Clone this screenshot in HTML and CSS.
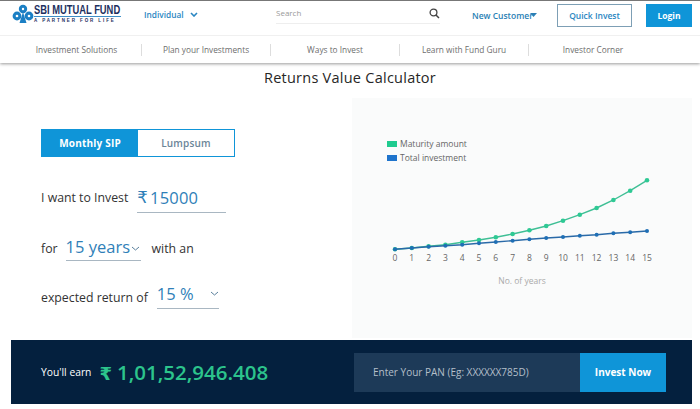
FILE: index.html
```html
<!DOCTYPE html>
<html lang="en">
<head>
    <meta charset="UTF-8">
    <title>Returns Value Calculator</title>
    <link rel="stylesheet" href="styles.css">
</head>
<body>
    <header class="site-header">
        <div class="top-row">
            <a class="logo">
                <svg class="logo-mark" viewBox="0 0 22 20" width="22" height="20">
                    <circle cx="11" cy="5" r="4.2" fill="#1b7fc4"/>
                    <circle cx="5" cy="12" r="4.4" fill="#1b7fc4"/>
                    <circle cx="17" cy="12" r="4.4" fill="#1b7fc4"/>
                    <circle cx="11" cy="5" r="1.2" fill="#fff"/>
                    <circle cx="5" cy="12" r="1.3" fill="#fff"/>
                    <circle cx="17" cy="12" r="1.3" fill="#fff"/>
                    <path d="M11 8 L14.5 19 H7.5 Z" fill="#1b7fc4"/>
                </svg>
                <span class="logo-text">
                    <span class="logo-name">SBI MUTUAL FUND</span>
                    <span class="logo-tag">A PARTNER FOR LIFE</span>
                </span>
            </a>
            <a class="user-type">Individual
                <svg width="8" height="5" viewBox="0 0 8 5"><path d="M1 1 L4 4 L7 1" fill="none" stroke="#2a86c2" stroke-width="1.6"/></svg>
            </a>
            <div class="search">
                <span>Search</span>
                <svg width="11" height="11" viewBox="0 0 11 11"><circle cx="4.5" cy="4.5" r="3.4" fill="none" stroke="#444" stroke-width="1.3"/><path d="M7 7 L10 10" stroke="#444" stroke-width="1.5"/></svg>
            </div>
            <a class="new-customer">New Customer
                <svg width="7" height="4" viewBox="0 0 7 4"><path d="M0 0 H7 L3.5 4 Z" fill="#2a7fb5"/></svg>
            </a>
            <a class="btn-quick">Quick Invest</a>
            <a class="btn-login">Login</a>
        </div>
        <nav class="main-nav">
            <a>Investment Solutions</a>
            <a>Plan your Investments</a>
            <a>Ways to Invest</a>
            <a>Learn with Fund Guru</a>
            <a>Investor Corner</a>
        </nav>
    </header>

    <main>
        <h1>Returns Value Calculator</h1>
        <div class="calculator">
            <section class="form">
                <div class="tabs">
                    <a class="tab active">Monthly SIP</a>
                    <a class="tab">Lumpsum</a>
                </div>
                <div class="form-row row-amount">
                    <span>I want to Invest</span>
                    <span class="field field-amount"><span class="rupee">₹</span>15000</span>
                </div>
                <div class="form-row row-years">
                    <span>for</span>
                    <span class="field field-years">15 years
                        <svg width="9" height="5" viewBox="0 0 9 5"><path d="M1 1 L4.5 4 L8 1" fill="none" stroke="#5a7f9c"/></svg>
                    </span>
                    <span>with an</span>
                </div>
                <div class="form-row row-return">
                    <span>expected return of</span>
                    <span class="field field-return">15 %
                        <svg width="9" height="5" viewBox="0 0 9 5"><path d="M1 1 L4.5 4 L8 1" fill="none" stroke="#5a7f9c"/></svg>
                    </span>
                </div>
            </section>
            <section class="chart">
                <svg viewBox="352 98 340 240" width="340" height="240">
                    <rect x="387" y="141" width="10" height="6" fill="#1fcb8f"/>
                    <rect x="387" y="155" width="10" height="6" fill="#1f74cc"/>
                    <text class="legend" x="400" y="147">Maturity amount</text>
                    <text class="legend" x="400" y="161">Total investment</text>

                    <polyline class="line-green" points="395,249.3 411.8,248 428.6,246.3 445.4,244.7 462.2,242.3 479,240 495.8,237.3 512.6,234 529.4,230.3 546.2,226 563,220.7 579.8,214.7 596.6,208 613.4,200 630.2,190.7 647,180.3"/>
                    <g class="dots-green">
                        <circle cx="395" cy="249.3" r="2.3"/><circle cx="411.8" cy="248" r="2.3"/><circle cx="428.6" cy="246.3" r="2.3"/><circle cx="445.4" cy="244.7" r="2.3"/>
                        <circle cx="462.2" cy="242.3" r="2.3"/><circle cx="479" cy="240" r="2.3"/><circle cx="495.8" cy="237.3" r="2.3"/><circle cx="512.6" cy="234" r="2.3"/>
                        <circle cx="529.4" cy="230.3" r="2.3"/><circle cx="546.2" cy="226" r="2.3"/><circle cx="563" cy="220.7" r="2.3"/><circle cx="579.8" cy="214.7" r="2.3"/>
                        <circle cx="596.6" cy="208" r="2.3"/><circle cx="613.4" cy="200" r="2.3"/><circle cx="630.2" cy="190.7" r="2.3"/><circle cx="647" cy="180.3" r="2.3"/>
                    </g>
                    <polyline class="line-blue" points="395,249.3 411.8,248 428.6,246.7 445.4,245.7 462.2,244.7 479,243.3 495.8,242 512.6,240.7 529.4,239.3 546.2,238 563,237 579.8,235.7 596.6,234.7 613.4,233.3 630.2,232.3 647,231"/>
                    <g class="dots-blue">
                        <circle cx="395" cy="249.3" r="2"/><circle cx="411.8" cy="248" r="2"/><circle cx="428.6" cy="246.7" r="2"/><circle cx="445.4" cy="245.7" r="2"/>
                        <circle cx="462.2" cy="244.7" r="2"/><circle cx="479" cy="243.3" r="2"/><circle cx="495.8" cy="242" r="2"/><circle cx="512.6" cy="240.7" r="2"/>
                        <circle cx="529.4" cy="239.3" r="2"/><circle cx="546.2" cy="238" r="2"/><circle cx="563" cy="237" r="2"/><circle cx="579.8" cy="235.7" r="2"/>
                        <circle cx="596.6" cy="234.7" r="2"/><circle cx="613.4" cy="233.3" r="2"/><circle cx="630.2" cy="232.3" r="2"/><circle cx="647" cy="231" r="2"/>
                    </g>
                    <g class="ticks">
                        <text x="395" y="261">0</text><text x="411.8" y="261">1</text><text x="428.6" y="261">2</text><text x="445.4" y="261">3</text>
                        <text x="462.2" y="261">4</text><text x="479" y="261">5</text><text x="495.8" y="261">6</text><text x="512.6" y="261">7</text>
                        <text x="529.4" y="261">8</text><text x="546.2" y="261">9</text><text x="563" y="261">10</text><text x="579.8" y="261">11</text>
                        <text x="596.6" y="261">12</text><text x="613.4" y="261">13</text><text x="630.2" y="261">14</text><text x="647" y="261">15</text>
                    </g>
                    <text class="axis-title" x="522" y="284">No. of years</text>
                </svg>
            </section>
        </div>

        <div class="earn-bar">
            <div class="earn">
                <span class="earn-label">You'll earn</span>
                <span class="earn-value"><span class="rupee">₹</span>1,01,52,946.408</span>
            </div>
            <div class="pan">
                <span class="pan-input">Enter Your PAN (Eg: XXXXXX785D)</span>
                <a class="pan-btn">Invest Now</a>
            </div>
        </div>
    </main>
</body>
</html>
```

FILE: styles.css
```css
/* General */
* {
    margin: 0;
    padding: 0;
    box-sizing: border-box;
}

body {
    width: 700px;
    height: 409px;
    overflow: hidden;
    background-color: #ffffff;
    color: #333333;
    font-family: 'Open Sans', sans-serif;
}

/* Header */
.site-header {
    height: 63px;
    border-top: 1px solid #777777;
    box-shadow: 0 1px 3px rgba(0, 0, 0, 0.4);
    position: relative;
}

.top-row {
    height: 35px;
    display: flex;
    align-items: center;
    border-bottom: 1px solid #f0f0f0;
    padding-left: 12px;
}

.logo {
    display: flex;
    align-items: center;
    gap: 0;
    width: 132px;
    flex-shrink: 0;
    margin-top: -8px;
}

.logo-mark {
    flex-shrink: 0;
}

.logo-text {
    display: flex;
    flex-direction: column;
    width: 87px;
}

.logo-name {
    font-family: 'Liberation Sans', sans-serif;
    font-weight: 700;
    font-size: 13px;
    line-height: 12px;
    color: #1d2f5e;
    white-space: nowrap;
    transform: scaleX(0.72);
    transform-origin: left center;
}

.logo-tag {
    font-family: 'Liberation Sans', sans-serif;
    font-weight: 700;
    font-size: 4.5px;
    line-height: 7px;
    letter-spacing: 1.9px;
    color: #1d2f5e;
    border-top: 1px solid #3f8fc7;
    white-space: nowrap;
}

.user-type {
    display: flex;
    align-items: center;
    gap: 6px;
    width: 132px;
    margin-top: -7px;
    font-size: 8.3px;
    font-weight: 600;
    color: #2a86c2;
}

.search {
    width: 164px;
    height: 20px;
    margin-top: -8px;
    padding-top: 3px;
    display: flex;
    justify-content: space-between;
    align-items: flex-start;
    border-bottom: 1px solid #eeeeee;
    font-size: 8px;
    color: #999999;
}

.search svg {
    margin-top: 1px;
}

.new-customer {
    display: flex;
    align-items: center;
    width: 85px;
    margin-left: 32px;
    margin-top: -6px;
    font-size: 8.5px;
    font-weight: 600;
    color: #2a7fb5;
    white-space: nowrap;
}

.new-customer svg {
    margin-left: -3px;
}

.btn-quick,
.btn-login {
    height: 23px;
    margin-top: -6px;
    display: flex;
    align-items: center;
    justify-content: center;
    font-size: 8.5px;
    font-weight: 600;
}

.btn-quick {
    width: 75px;
    border: 1px solid #7d9fb5;
    color: #2a86c2;
}

.btn-login {
    width: 46px;
    margin-left: 14px;
    background-color: #0f95d8;
    color: #ffffff;
    font-weight: 700;
}

.main-nav {
    height: 27px;
    display: grid;
    grid-template-columns: repeat(5, 129px);
    padding-left: 12px;
    align-items: center;
}

.main-nav a {
    text-align: center;
    font-size: 8.3px;
    line-height: 12px;
    color: #6e6e6e;
    border-left: 1px solid #dddddd;
}

.main-nav a:first-child {
    border-left: none;
}

/* Calculator */
h1 {
    height: 35px;
    padding-top: 4px;
    text-align: center;
    font-size: 14.5px;
    font-weight: 400;
    line-height: 22px;
    color: #262626;
    letter-spacing: 0.25px;
}

.calculator {
    display: grid;
    grid-template-columns: 352px 340px;
    height: 240px;
}

.form {
    padding: 31px 0 0 41px;
    font-size: 12.3px;
    color: #333333;
}

.tabs {
    display: flex;
    width: 194px;
    height: 28px;
    border: 1px solid #0f95d8;
    margin-bottom: 27px;
}

.tab {
    flex: 1;
    display: flex;
    align-items: center;
    justify-content: center;
    font-size: 10px;
    font-weight: 600;
    color: #6b8598;
    letter-spacing: 0.2px;
}

.tab.active {
    flex: 0 0 96px;
    background-color: #0f95d8;
    color: #ffffff;
    font-weight: 700;
}

.form-row {
    display: flex;
    align-items: flex-end;
    white-space: nowrap;
    height: 29px;
}

.form-row > span:not(.field) {
    padding-bottom: 5px;
    line-height: 14px;
}

.field {
    display: flex;
    align-items: center;
    height: 28px;
    border-bottom: 1px solid #a9b7c2;
    font-size: 16.5px;
    color: #2f7fb8;
}

.row-amount {
    margin-bottom: 19px;
}

.row-amount > span:not(.field) {
    padding-bottom: 8px;
}

.field-amount {
    width: 89px;
    margin-left: 9px;
    padding-bottom: 2px;
    letter-spacing: 0.2px;
}

.rupee {
    font-family: 'DejaVu Sans', sans-serif;
    margin-right: 2px;
}

.row-years {
    margin-bottom: 19px;
}

.field-years {
    width: 75px;
    margin: 0 11px 0 8px;
}

.field-years svg {
    margin: 3px 0 0 1px;
}

.row-return {
    margin-top: 2px;
}

.row-return > span:not(.field) {
    padding-bottom: 4px;
}

.field-return {
    width: 62px;
    margin-left: 9px;
    padding-bottom: 2px;
    justify-content: space-between;
}

.chart {
    background-color: #fafbfb;
}

.chart svg {
    display: block;
}

.legend {
    font-size: 8.5px;
    fill: #666666;
}

.line-green {
    fill: none;
    stroke: #3fbf95;
    stroke-width: 1.4;
}

.line-blue {
    fill: none;
    stroke: #2a6aa8;
    stroke-width: 1.4;
}

.dots-green {
    fill: #2ec994;
}

.dots-blue {
    fill: #1f6fb5;
}

.ticks text {
    font-size: 8.5px;
    fill: #666666;
    text-anchor: middle;
}

.axis-title {
    font-size: 8.5px;
    fill: #aaaaaa;
    text-anchor: middle;
}

/* Bottom bar */
.earn-bar {
    display: flex;
    justify-content: space-between;
    align-items: center;
    width: 681px;
    height: 64px;
    margin: 2px 0 0 11px;
    padding: 0 26px 0 30px;
    background-color: #04203e;
}

.earn {
    display: flex;
    align-items: center;
    gap: 8px;
}

.earn-label {
    font-size: 10.3px;
    color: #ffffff;
}

.earn-value {
    font-size: 20.5px;
    font-weight: 600;
    color: #2cc48c;
    white-space: nowrap;
}

.earn-value .rupee {
    font-size: 18px;
    margin-right: 5px;
}

.pan {
    display: flex;
    height: 39px;
}

.pan-input {
    width: 226px;
    padding-left: 19px;
    display: flex;
    align-items: center;
    background-color: #1d3a58;
    color: #b4bfc9;
    font-size: 10px;
}

.pan-btn {
    width: 86px;
    display: flex;
    align-items: center;
    justify-content: center;
    background-color: #0f95d8;
    color: #ffffff;
    font-size: 10px;
    font-weight: 700;
}
```
